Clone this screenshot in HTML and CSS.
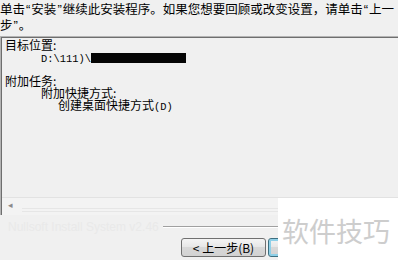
FILE: index.html
```html
<!DOCTYPE html>
<html lang="zh-CN">
<head>
<meta charset="utf-8">
<title>安装</title>
<link rel="stylesheet" href="styles.css">
</head>
<body>
<div class="dialog">
  <p class="intro">单击<span class="qt">“</span>安装<span class="qt">”</span>继续此安装程序。如果您想要回顾或改变设置，请单击<span class="qt">“</span>上一<br>步<span class="qt">”</span>。</p>
  <div class="memo">
    <div class="memo-text">
      <div class="ln">目标位置:</div>
      <div class="ln ind1"><span class="lat">D:\111)\</span><span class="redact"></span></div>
      <div class="ln"></div>
      <div class="ln">附加任务:</div>
      <div class="ln ind1">附加快捷方式:</div>
      <div class="ln ind2">创建桌面快捷方式<span class="lat">(D)</span></div>
    </div>
    <div class="hscroll">
      <span class="arrow">◂</span>
      <span class="track"></span>
    </div>
  </div>
  <div class="footer">
    <div class="brand">
      <span class="brand-text">Nullsoft Install System v2.46</span>
      <span class="etch"></span>
    </div>
    <div class="buttons">
      <button class="btn">&lt; 上一步(<u>B</u>)</button>
      <button class="btn default" aria-label="安装(I)"></button>
    </div>
  </div>
</div>
<div class="watermark">软件技巧</div>
</body>
</html>
```
FILE: styles.css
```css
html, body {
  margin: 0;
  padding: 0;
}
body {
  width: 398px;
  height: 260px;
  overflow: hidden;
  background: #f0f0f0;
  font-family: "Noto Sans CJK SC", "Liberation Sans", sans-serif;
  color: #000;
  position: relative;
}
.dialog {
  display: flex;
  flex-direction: column;
}
.intro {
  margin: 0;
  height: 36px;
  padding-top: 1px;
  box-sizing: border-box;
  font-size: 12.5px;
  line-height: 15px;
  white-space: nowrap;
}
.qt {
  font-family: "Liberation Sans", sans-serif;
  font-size: 13px;
  padding: 0 1px;
}
.memo {
  height: 179px;
  margin-right: -4px;
  box-sizing: border-box;
  border-top: 1px solid #b4b4b4;
  border-left: 1px solid #b4b4b4;
  box-shadow: inset 1px 1px 0 #6e6e6e;
  display: flex;
  flex-direction: column;
  background: #f0f0f0;
}
.memo-text {
  flex: 1;
  padding: 2px 0 0 4px;
  font-size: 12px;
  line-height: 12px;
}
.ln {
  height: 12px;
  white-space: nowrap;
}
.ind1 { padding-left: 36px; }
.ind2 { padding-left: 53px; }
.lat {
  font-family: "Liberation Mono", monospace;
  font-size: 10.4px;
}
.redact {
  display: inline-block;
  width: 95px;
  height: 10px;
  background: #050505;
  vertical-align: -1px;
}
.hscroll {
  height: 17px;
  margin-left: 1px;
  border-top: 1px solid #e2e2e2;
  display: flex;
  align-items: flex-start;
  background: #f3f3f3;
}
.arrow {
  width: 14px;
  padding-left: 6px;
  font-size: 9px;
  line-height: 9px;
  padding-top: 3px;
  color: #8a8a8a;
  font-family: "DejaVu Sans", sans-serif;
}
.track {
  flex: 1;
  margin-top: 10px;
  border-top: 1px solid #e6e6e6;
  border-bottom: 1px solid #e6e6e6;
  height: 2px;
}
.footer {
  display: flex;
  flex-direction: column;
}
.brand {
  height: 22px;
  display: flex;
  align-items: center;
  padding-left: 8px;
  padding-top: 2px;
  box-sizing: border-box;
}
.brand-text {
  font-family: "Liberation Sans", sans-serif;
  font-size: 12px;
  color: #e9e9e9;
  white-space: nowrap;
  padding-right: 4px;
}
.etch {
  flex: 1;
  border-top: 1px solid #a0a0a0;
  border-bottom: 1px solid #ffffff;
}
.buttons {
  display: flex;
  gap: 2px;
  padding-left: 181px;
  padding-top: 1px;
}
.btn {
  width: 85px;
  height: 19px;
  flex: none;
  padding: 0;
  border: 1px solid #707070;
  border-radius: 3px;
  background: linear-gradient(#f4f4f4, #e6e6e6 50%, #d8d8d8 50%, #d2d2d2);
  font-family: "Noto Sans CJK SC", sans-serif;
  font-size: 12px;
  line-height: 15px;
  color: #000;
}
.btn u { text-decoration: none; }
.btn.default {
  border-color: #3c6f80;
  box-shadow: inset 0 0 0 2px #8fd0e8;
}
.watermark {
  position: absolute;
  left: 278px;
  top: 198px;
  right: 0;
  bottom: 0;
  background: #ffffff;
  color: #cdcdcd;
  font-family: "Noto Sans CJK SC", sans-serif;
  font-size: 27px;
  line-height: 27px;
  padding: 19px 0 0 4px;
  white-space: nowrap;
}
```
